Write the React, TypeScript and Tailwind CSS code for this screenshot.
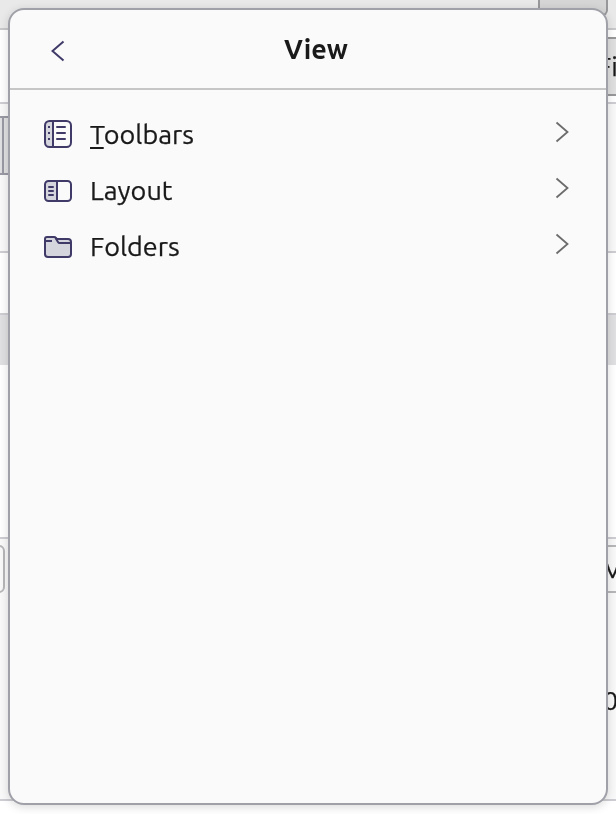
import type { ReactNode } from "react";

const ink = "#3f3a68";

function ToolbarsIcon() {
  return (
    <svg width="28" height="28" viewBox="0 0 28 28" fill="none" stroke={ink} strokeWidth="2">
      <path d="M9 1H5a4 4 0 0 0-4 4v18a4 4 0 0 0 4 4h4z" fill="#d5d5de" stroke="none" />
      <rect x="1" y="1" width="26" height="26" rx="4.500" />
      <path d="M9 1v26" />
      <path d="M13 7h8M13 13h8M13 19h8" strokeLinecap="round" />
      <path d="M4 7h2M4 13h2M4 19h2" />
    </svg>
  );
}

function LayoutIcon() {
  return (
    <svg width="28" height="28" viewBox="0 0 28 28" fill="none" stroke={ink} strokeWidth="2">
      <path d="M13 5H4a3 3 0 0 0-3 3v14a3 3 0 0 0 3 3h9z" fill="#d5d5de" stroke="none" />
      <rect x="1" y="5" width="26" height="20" rx="3.500" />
      <path d="M13 5v20" />
      <path d="M5 11h4M5 15h4M5 19h4" strokeLinecap="round" />
    </svg>
  );
}

function FoldersIcon() {
  return (
    <svg width="28" height="28" viewBox="0 0 28 28" fill="none" stroke={ink} strokeWidth="2" strokeLinejoin="round">
      <path d="M1 8V7a2 2 0 0 1 2-2h7c1 0 1.500.3 2 1l1 1h11a3 3 0 0 1 3 3v12a3 3 0 0 1-3 3H4a3 3 0 0 1-3-3z" fill="#d5d5de" />
      <path d="M2 9h6" />
      <path d="M11.500 6l2.500 4c.4.700.8 1 1.500 1H26" />
    </svg>
  );
}

function Row({ icon, children }: { icon: ReactNode; children: ReactNode }) {
  return (
    <div className="flex h-14 items-center pl-[34px] pr-[37px]">
      {icon}
      <span className="ml-[18px] flex-1 text-[27px] leading-8 [-webkit-text-stroke:0.25px_#1a1a1a]">{children}</span>
      <svg className="mb-1" width="14" height="22" viewBox="0 0 14 22" fill="none" stroke="#6c6c6c" strokeWidth="1.8">
        <path d="M1.500 1.500L12.500 11L1.500 20.500" />
      </svg>
    </div>
  );
}

function Backdrop() {
  return (
    <div className="flex h-[814px] flex-col bg-white [-webkit-text-stroke:0.25px_#1a1a1a]">
      <div className="flex h-[30px] items-start justify-end border-b-2 border-[#c8c8cb] bg-[#e9e9e9]">
        <div className="mr-2 h-4 w-[70px] rounded-b-md border-2 border-t-0 border-[#98989b] bg-[#d6d6d6]" />
      </div>
      <div className="flex h-[74px] justify-end overflow-hidden border-b-2 border-[#cdcdd2] pt-[7px]">
        <div className="h-[59px] w-[30px] border-y-2 border-[#98989b] bg-[#e0e0e0] pl-[11px] text-[27px] leading-[54px]">
          <span className="inline-block will-change-transform">Fi</span>
        </div>
      </div>
      <div className="h-[149px] border-b-2 border-[#cdcdd2] bg-[#f9f9fa] pt-3">
        <div className="h-[59px] w-9 border-y-2 border-[#9999a3] bg-[#e0e0e2] pl-0.5">
          <div className="h-full w-0.5 bg-[#9999a3]" />
        </div>
      </div>
      <div className="h-[62px] border-b-2 border-[#cdcdd2]" />
      <div className="h-[50px] bg-[#e0e0e2]" />
      <div className="h-[174px] border-b-2 border-[#cdcdd2]" />
      <div className="flex h-[262px] justify-between overflow-hidden border-b-2 border-[#cdcdd2] bg-[#f9f9fa]">
        <div className="-ml-4 mt-1.5 h-12 w-[21px] rounded-md border-2 border-[#b7b7b9]" />
        <div className="w-[16px] text-[27px] leading-8">
          <div className="mt-1.5 h-12 border-y-2 border-[#b7b7b9] leading-[42px]">
            <span className="ml-1 inline-block will-change-transform">V</span>
          </div>
          <div className="mt-[91px]">
            <span className="ml-[3px] inline-block will-change-transform">0</span>
          </div>
        </div>
      </div>
    </div>
  );
}

export default function App() {
  return (
    <main className="relative h-[814px] w-[616px] overflow-hidden font-['Ubuntu','Noto_Sans',sans-serif] text-[#1a1a1a]">
      <Backdrop />
      <section className="absolute left-2 top-2 h-[797px] w-[600px] rounded-2xl border-2 border-[#a0a0a9] bg-[#fafafa] shadow-[0_2px_10px_rgba(0,0,0,0.15)]">
        <header className="flex h-20 items-center border-b-2 border-[#c6c6c6] pl-[41px] pr-[25px]">
          <svg className="mt-1" width="14" height="22" viewBox="0 0 14 22" fill="none" stroke={ink} strokeWidth="2">
            <path d="M12.500 1.500L1.500 11L12.500 20.500" />
          </svg>
          <h1 className="mb-px mr-[14px] flex-1 text-center text-[27px] font-bold leading-8">View</h1>
        </header>
        <nav className="pt-4">
          <Row icon={<ToolbarsIcon />}>
            <span className="underline decoration-2 underline-offset-[3px]">T</span>oolbars
          </Row>
          <Row icon={<LayoutIcon />}>Layout</Row>
          <Row icon={<FoldersIcon />}>Folders</Row>
        </nav>
      </section>
    </main>
  );
}
